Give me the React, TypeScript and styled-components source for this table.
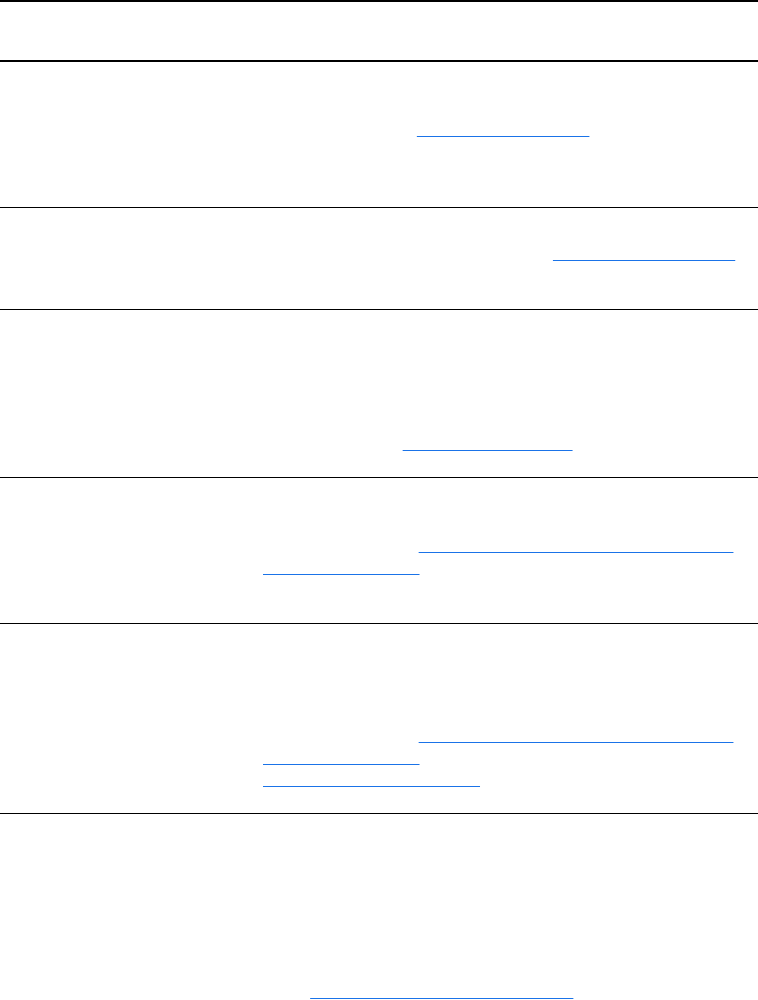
import React from "react";
import styled, { createGlobalStyle } from "styled-components";

const GlobalStyle = createGlobalStyle`
  * {
    box-sizing: border-box;
  }
  html, body {
    margin: 0;
    padding: 0;
    background: #fff;
  }
  body {
    font-family: "Liberation Sans", Arial, sans-serif;
    font-size: 16px;
    line-height: 22px;
    font-kerning: none;
    font-variant-ligatures: none;
  }
`;

// the text itself renders invisible, only rules and link underlines show
const Table = styled.table`
  width: 758px;
  border-collapse: separate;
  border-spacing: 0;
  table-layout: fixed;
  border-top: 2px solid #000;
  color: transparent;
`;

const HeadCell = styled.th<{ $width?: number }>`
  width: ${(p) => (p.$width ? `${p.$width}px` : "auto")};
  padding: 13px 12px 23px;
  text-align: left;
  font-weight: 700;
  border-bottom: 2px solid #000;
`;

const Cell = styled.td`
  padding: 13px 12px 22px;
  vertical-align: top;
  border-bottom: 1px solid #000;
`;

const Line = styled.div<{ $wrap?: boolean }>`
  display: block;
  white-space: ${(p) => (p.$wrap ? "normal" : "nowrap")};
`;

const Link = styled.a`
  color: transparent;
  text-decoration: underline;
  text-decoration-color: #1a73e8;
  text-decoration-thickness: 1px;
  text-decoration-skip-ink: none;
`;

type Row = {
  name: string;
  lines: React.ReactNode[];
};

const ssoGuide = (
  <Line $wrap>
    For setup steps, read{" "}
    <Link href="#sso">Configuring SAML single sign-on (SSO) with your identity providers</Link>.
  </Line>
);

const rows: Row[] = [
  {
    name: "locale",
    lines: [
      <Line>Sets the language and region used to format</Line>,
      <Line>dates, numbers and currency values in the app.</Line>,
      <Line>
        The full list is kept on <Link href="#locales">Supported locale names</Link>.
      </Line>,
      <Line>Defaults to the browser locale when left empty.</Line>,
      <Line>Example: en-GB, de-DE, ja-JP</Line>,
    ],
  },
  {
    name: "rate_limit",
    lines: [
      <Line>Maximum number of API requests allowed per minute.</Line>,
      <Line>
        Limits are enforced per workspace; read <Link href="#limits">Account limits and quotas</Link>
      </Line>,
      <Line>Default: 600. Set to 0 to disable the limit.</Line>,
    ],
  },
  {
    name: "retention_days",
    lines: [
      <Line>Number of days that event data and logs are kept</Line>,
      <Line>before they are permanently deleted. Older records</Line>,
      <Line>are removed by a nightly job that runs at 02:00 UTC.</Line>,
      <Line>Exports created before the cutoff are not affected.</Line>,
      <Line>Default: 90. Minimum: 7. Maximum: 3650.</Line>,
      <Line>
        See the chapter on <Link href="#retention">Retention and exporting</Link>.
      </Line>,
    ],
  },
  {
    name: "sso_enabled",
    lines: [
      <Line>Turns on single sign-on for all members of the</Line>,
      <Line>workspace. Password login is disabled once on.</Line>,
      ssoGuide,
      <Line>Default: false.</Line>,
    ],
  },
  {
    name: "scim_enabled",
    lines: [
      <Line>Allows your identity provider to create, update</Line>,
      <Line>and deactivate member accounts automatically.</Line>,
      <Line>Requires SSO to be enabled first. Changes made</Line>,
      <Line>in the provider are synced within a few minutes.</Line>,
      ssoGuide,
      <Line>
        <Link href="#scim">SCIM provisioning setup guide</Link>.
      </Line>,
    ],
  },
  {
    name: "webhook_url",
    lines: [
      <Line>Endpoint that receives a POST request for every</Line>,
      <Line>event in the workspace. The body is JSON and is</Line>,
      <Line>signed with the secret shown in the settings page.</Line>,
      <Line>Requests time out after 10 seconds and failed</Line>,
      <Line>deliveries are retried up to five times with an</Line>,
      <Line>increasing delay between each attempt.</Line>,
      <Line>Only HTTPS addresses are accepted.</Line>,
      <Line>
        Read: <Link href="#events">Migrating from the legacy Events API</Link>
      </Line>,
      <Line>Default: none.</Line>,
    ],
  },
];

const App = () => {
  return (
    <>
      <GlobalStyle />
      <Table>
        <thead>
          <tr>
            <HeadCell $width={251}>Setting</HeadCell>
            <HeadCell>Description</HeadCell>
          </tr>
        </thead>
        <tbody>
          {rows.map((row) => (
            <tr key={row.name}>
              <Cell>{row.name}</Cell>
              <Cell>
                {row.lines.map((line, i) => (
                  <React.Fragment key={i}>{line}</React.Fragment>
                ))}
              </Cell>
            </tr>
          ))}
        </tbody>
      </Table>
    </>
  );
};

export default App;
